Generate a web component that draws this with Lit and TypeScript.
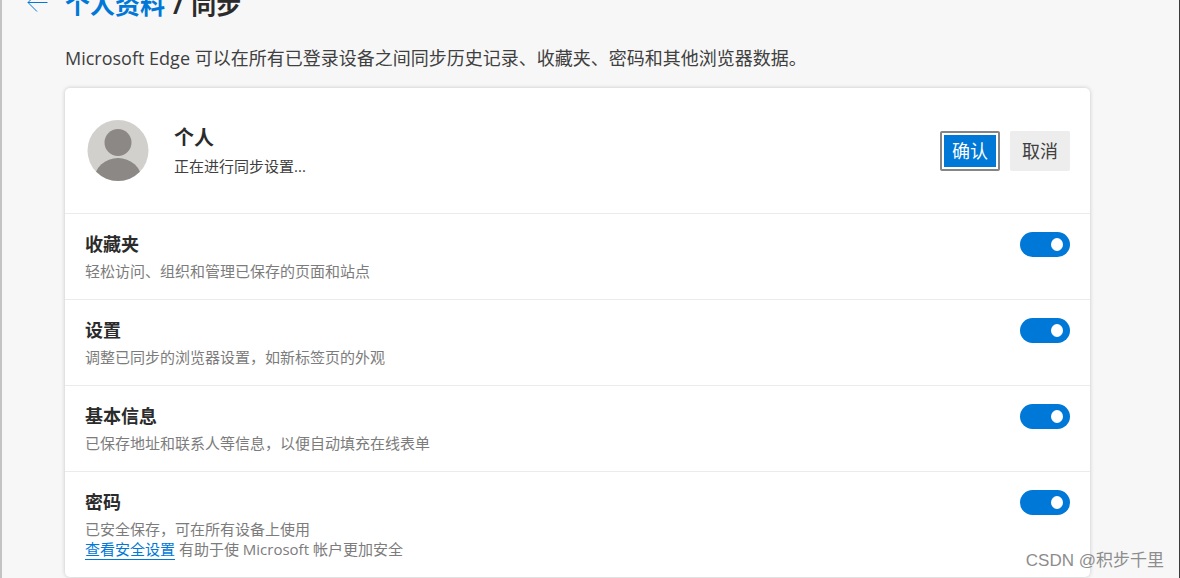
import { LitElement, html, css, svg, nothing } from "lit";
import { customElement, property } from "lit/decorators.js";

interface SyncItem {
  id: string;
  title: string;
  detail: string;
  link?: string;
  afterLink?: string;
}

const ITEMS: SyncItem[] = [
  { id: "favorites", title: "收藏夹", detail: "轻松访问、组织和管理已保存的页面和站点" },
  { id: "settings", title: "设置", detail: "调整已同步的浏览器设置，如新标签页的外观" },
  { id: "basic", title: "基本信息", detail: "已保存地址和联系人等信息，以便自动填充在线表单" },
  {
    id: "passwords",
    title: "密码",
    detail: "已安全保存，可在所有设备上使用",
    link: "查看安全设置",
    afterLink: "有助于使 Microsoft 帐户更加安全",
  },
];

const avatar = svg`
  <svg class="avatar" viewBox="0 0 62 62" aria-hidden="true">
    <defs><clipPath id="disc"><circle cx="31" cy="30.5" r="30.5" /></clipPath></defs>
    <circle cx="31" cy="30.5" r="30.5" fill="#d2d0cd" />
    <circle cx="31" cy="22.5" r="13.5" fill="#8c8885" />
    <ellipse cx="31" cy="59.5" rx="23.5" ry="21.5" fill="#8c8885" clip-path="url(#disc)" />
  </svg>`;

@customElement("sync-row")
export class SyncRow extends LitElement {
  @property({ attribute: false }) item!: SyncItem;

  static styles = css`
    :host {
      display: block;
      border-top: 1px solid #ebebeb;
    }
    .row {
      display: flex;
      justify-content: space-between;
      align-items: flex-start;
      padding: 18px 20px;
    }
    .title {
      display: block;
      font-size: 18px;
      line-height: 24px;
      font-weight: 700;
      color: #2b2b2b;
    }
    .detail {
      margin: 5px 0 0;
      font-size: 15px;
      line-height: 20px;
      color: #7c7c7c;
    }
    .link {
      color: #0078d7;
      text-decoration: none;
      border-bottom: 1px solid #0078d7;
    }
    .switch {
      appearance: none;
      flex: none;
      display: flex;
      align-items: center;
      justify-content: flex-start;
      box-sizing: border-box;
      width: 50px;
      height: 25px;
      margin: 0;
      padding: 0 7px;
      border-radius: 13px;
      background: #8a8a8a;
    }
    .switch:checked {
      justify-content: flex-end;
      background: #0078d7;
    }
    .switch::before {
      content: "";
      width: 12px;
      height: 13px;
      border-radius: 50%;
      background: #fff;
    }
  `;

  render() {
    const { id, title, detail, link, afterLink } = this.item;
    return html`
      <div class="row">
        <div>
          <label class="title" for=${id}>${title}</label>
          <p class="detail">
            ${detail}${link
              ? html`<br /><a class="link" href="#security">${link}</a> ${afterLink}`
              : nothing}
          </p>
        </div>
        <input class="switch" id=${id} type="checkbox" role="switch" checked />
      </div>
    `;
  }
}

@customElement("app-root")
export class AppRoot extends LitElement {
  static styles = css`
    :host {
      display: block;
      box-sizing: border-box;
      height: 100vh;
      overflow: hidden;
      border-left: 2px solid #c3c3c3;
      border-right: 1px solid #3b3b3b;
      background: #f7f7f7;
      color: #404040;
      font-family: "Open Sans", "Noto Sans CJK SC", sans-serif;
      font-weight: 400;
    }
    .page {
      padding: 0 89px 0 63px;
    }
    .header {
      display: flex;
      align-items: center;
      gap: 17px;
      margin: -14px 0 0 -38px;
    }
    .back {
      display: flex;
      padding: 0;
      border: 0;
      background: none;
    }
    .arrow {
      width: 21px;
      height: 20px;
    }
    .heading {
      display: flex;
      gap: 8px;
      margin: 0;
      font-size: 25px;
      line-height: 36px;
      font-weight: 700;
      color: #2b2b2b;
    }
    .crumb {
      color: #0078d7;
      text-decoration: none;
    }
    .intro {
      margin: 23px 0 17px;
      font-size: 18px;
      line-height: 26px;
    }
    .card {
      border-radius: 5px;
      background: #fff;
      box-shadow: 0 0 4px rgba(0, 0, 0, 0.2);
    }
    .profile {
      display: flex;
      align-items: center;
      padding: 32px 20px 31px 22px;
    }
    .avatar {
      width: 62px;
      height: 62px;
    }
    .who {
      flex: 1;
      margin-left: 25px;
    }
    .name {
      margin: 0;
      font-size: 20px;
      line-height: 28px;
      font-weight: 700;
      color: #2b2b2b;
    }
    .status {
      margin: 4px 0 2px;
      font-size: 15px;
      line-height: 20px;
    }
    .actions {
      display: flex;
      gap: 10px;
    }
    .button {
      box-sizing: border-box;
      width: 60px;
      height: 40px;
      padding: 0 0 2px;
      border: 0;
      border-radius: 2px;
      background: #ededed;
      color: #404040;
      font: inherit;
      font-size: 18px;
    }
    .primary {
      border: 2px solid #858585;
      background: #0078d7;
      box-shadow: inset 0 0 0 2px #fff;
      color: #fff;
    }
    .watermark {
      position: absolute;
      right: 16px;
      bottom: 4px;
      font-family: "Liberation Sans", "Noto Sans CJK SC", sans-serif;
      font-size: 17px;
      line-height: 26px;
      color: #8d8d8d;
    }
  `;

  render() {
    return html`
      <main class="page">
        <header class="header">
          <button class="back" aria-label="返回">
            <svg class="arrow" viewBox="0 0 21 20" fill="none" stroke="#0078d7">
              <path d="M20.5 8.5H1M9.5 0L1 8.5l9 9" />
            </svg>
          </button>
          <h1 class="heading">
            <a class="crumb" href="#profiles">个人资料</a><span>/</span><span>同步</span>
          </h1>
        </header>
        <p class="intro">
          Microsoft Edge 可以在所有已登录设备之间同步历史记录、收藏夹、密码和其他浏览器数据。
        </p>
        <section class="card">
          <div class="profile">
            ${avatar}
            <div class="who">
              <h2 class="name">个人</h2>
              <p class="status">正在进行同步设置...</p>
            </div>
            <div class="actions">
              <button class="button primary">确认</button>
              <button class="button">取消</button>
            </div>
          </div>
          ${ITEMS.map((item) => html`<sync-row .item=${item}></sync-row>`)}
        </section>
      </main>
      <div class="watermark">CSDN @积步千里</div>
    `;
  }
}
